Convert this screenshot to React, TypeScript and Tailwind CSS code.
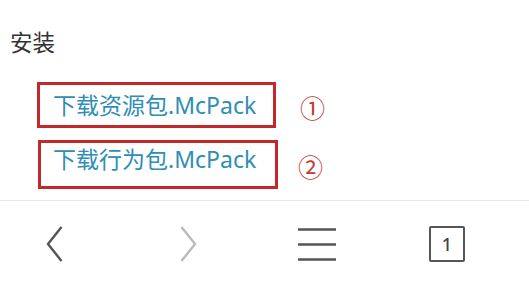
import type { ReactNode } from "react";

const FONT = {
  fontFamily: '"Noto Sans", "Noto Sans CJK SC", sans-serif',
};

function PackLink({
  children,
  boxClass,
  mark,
  markClass,
}: {
  children: ReactNode;
  boxClass: string;
  mark: string;
  markClass: string;
}) {
  return (
    <div className="flex items-center">
      <div className={`border-[3px] border-[#c3282c] flex ${boxClass}`}>
        <a className="text-[23px] leading-[28px] text-[#2f8db6] whitespace-nowrap">
          {children}
        </a>
      </div>
      <span
        className={`text-[25px] leading-[26px] text-[#c33a32] ${markClass}`}
        style={{ fontFamily: '"Noto Sans CJK SC", sans-serif' }}
      >
        {mark}
      </span>
    </div>
  );
}

export default function App() {
  return (
    <div
      className="w-[529px] h-[283px] bg-white flex flex-col overflow-hidden"
      style={FONT}
    >
      {/* 内容 */}
      <div className="h-[200px] flex flex-col">
        <div className="ml-[10px] mt-[30px] text-[22.5px] leading-[26px] text-[#333]">
          安装
        </div>
        <div className="mt-[26px] ml-[37px] flex flex-col gap-[12px]">
          <PackLink
            boxClass="w-[239px] h-[46px] items-center pl-[13px]"
            mark="①"
            markClass="ml-[24px] mt-[4px]"
          >
            下载资源包.McPack
          </PackLink>
          <PackLink
            boxClass="ml-[1px] w-[240px] h-[49px] items-start pt-[2px] pl-[12px]"
            mark="②"
            markClass="ml-[20px] mt-[2px]"
          >
            下载行为包.McPack
          </PackLink>
        </div>
      </div>

      {/* 底部导航 */}
      <div className="flex-1 border-t border-[#e8e8e8] flex items-center pt-[4px]">
        <svg
          className="ml-[46px]"
          width="17"
          height="36"
          viewBox="0 0 17 36"
          fill="none"
          stroke="#555"
          strokeWidth="2.4"
        >
          <polyline points="15.5,1 2,18 15.5,35" />
        </svg>
        <svg
          className="ml-[117px]"
          width="17"
          height="36"
          viewBox="0 0 17 36"
          fill="none"
          stroke="#bbb"
          strokeWidth="2.4"
        >
          <polyline points="1.5,1 15,18 1.5,35" />
        </svg>
        <svg
          className="ml-[101px]"
          width="38"
          height="33"
          viewBox="0 0 38 33"
          fill="none"
          stroke="#555"
          strokeWidth="2.5"
        >
          <line x1="0" y1="1.5" x2="38" y2="1.5" />
          <line x1="0" y1="16.5" x2="38" y2="16.5" />
          <line x1="0" y1="31.5" x2="38" y2="31.5" />
        </svg>
        <div className="ml-[93px] w-[36px] h-[36px] border-[2.5px] border-[#555] rounded-[2px] flex items-center justify-center text-[18px] leading-none font-medium text-[#444]">
          1
        </div>
      </div>
    </div>
  );
}
